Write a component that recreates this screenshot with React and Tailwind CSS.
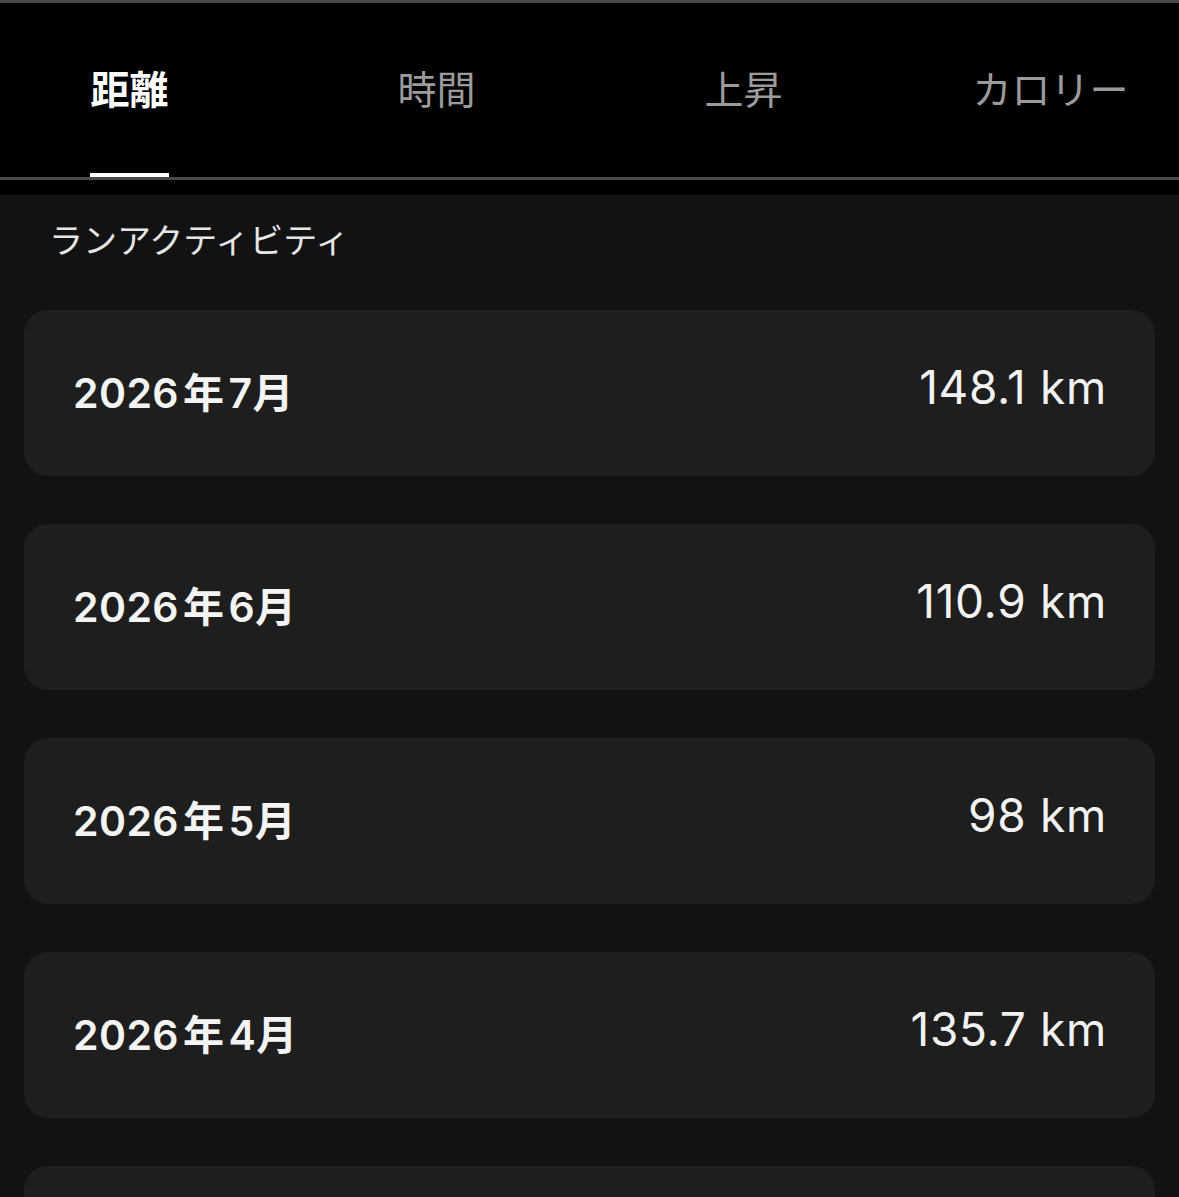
const tabs = [
  { label: '距離', active: true },
  { label: '時間', active: false },
  { label: '上昇', active: false },
  { label: 'カロリー', active: false },
]

const months = [
  { year: '2026', month: '7', distance: '148.1 km' },
  { year: '2026', month: '6', distance: '110.9 km' },
  { year: '2026', month: '5', distance: '98 km' },
  { year: '2026', month: '4', distance: '135.7 km' },
  { year: '2026', month: '3', distance: '121.4 km' },
]

const font = "font-['Inter','Noto_Sans_CJK_JP',sans-serif]"

function MonthCard({ year, month, distance }) {
  return (
    <div className="flex h-[166px] shrink-0 items-center justify-between rounded-[24px] bg-[#1e1e1e] pl-[49px] pr-[48px]">
      <span className="text-[41px] font-semibold leading-none tracking-[0.01em] text-[#f4f4f4]">
        {year}
        <span className="mx-[4px]">年</span>
        {month}月
      </span>
      <span className="pb-[12px] text-[46px] font-normal leading-none tracking-[0.015em] text-[#f2f2f2]">
        {distance}
      </span>
    </div>
  )
}

export default function App() {
  return (
    <div className={`${font} h-[1197px] w-full overflow-hidden bg-black`}>
      <div className="h-[3px] bg-[#4a4a4a]" />

      <div className="overflow-hidden">
        <div className="-ml-[24px] grid w-[1228px] grid-cols-4">
          {tabs.map((tab) => (
            <div key={tab.label} className="flex h-[174px] flex-col items-center">
              <div className="flex flex-1 items-center pt-[2px]">
                <span
                  className={
                    tab.active
                      ? 'text-[39px] font-bold leading-none text-white'
                      : 'text-[39px] font-normal leading-none text-[#9b9b9b]'
                  }
                >
                  {tab.label}
                </span>
              </div>
              <div className={tab.active ? 'h-[4px] w-[79px] bg-white' : 'h-[4px] w-[79px]'} />
            </div>
          ))}
        </div>
      </div>

      <div className="h-[3px] bg-[#4a4a4a]" />
      <div className="h-[15px] bg-black" />

      <div className="bg-[#121212] px-[24px] pt-[29px]">
        <h2 className="pl-[25px] text-[34px] font-normal leading-[34px] text-[#e6e6e6]">
          ランアクティビティ
        </h2>
        <div className="mt-[52px] flex flex-col gap-[48px] pb-[40px]">
          {months.map((item) => (
            <MonthCard key={item.month} {...item} />
          ))}
        </div>
      </div>
    </div>
  )
}
